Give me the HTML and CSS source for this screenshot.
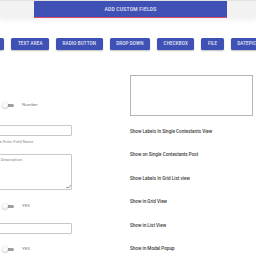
FILE: index.html
```html
<!DOCTYPE html>
<html>
<head>
<meta charset="utf-8">
<link rel="stylesheet" href="styles.css">
</head>
<body>
<header class="topbar">
  <div class="tab">ADD CUSTOM FIELDS</div>
</header>
<nav class="btn-row">
  <span class="btn">TEXT</span>
  <span class="btn">TEXT AREA</span>
  <span class="btn">RADIO BUTTON</span>
  <span class="btn">DROP DOWN</span>
  <span class="btn">CHECKBOX</span>
  <span class="btn">FILE</span>
  <span class="btn">DATEPICKER</span>
</nav>
<main class="content">
  <section class="left">
    <div class="toggle-row first"><span class="switch"><span class="knob"></span></span><span class="tlabel">Number</span></div>
    <div class="field input"></div>
    <div class="helper">Please Enter Field Name</div>
    <div class="field textarea"><span class="ph">Enter Description</span><span class="grip"></span></div>
    <div class="toggle-row t2"><span class="switch"><span class="knob"></span></span><span class="tlabel">YES</span></div>
    <div class="field input i2"></div>
    <div class="toggle-row t3"><span class="switch"><span class="knob"></span></span><span class="tlabel">YES</span></div>
  </section>
  <section class="right">
    <div class="box"></div>
    <div class="labels">
      <div class="lbl">Show Labels In Single Contestants View</div>
      <div class="lbl">Show on Single Contestants Post</div>
      <div class="lbl">Show Labels In Grid List view</div>
      <div class="lbl">Show in Grid View</div>
      <div class="lbl">Show in List View</div>
      <div class="lbl">Show in Modal Popup</div>
    </div>
  </section>
</main>
</body>
</html>
```
FILE: styles.css
```css
html, body {
  margin: 0;
  padding: 0;
  width: 256px;
  height: 256px;
  overflow: hidden;
  background: #ffffff;
  font-family: Roboto, "Liberation Sans", sans-serif;
  font-size: 5px;
  line-height: 6px;
}
.topbar {
  background: #f2f2f2;
  border-top: 1px solid #e2e2e2;
  box-shadow: 0 2px 5px rgba(0,0,0,0.06);
  display: flex;
  box-sizing: border-box;
  height: 18px;
}
.tab {
  margin-left: 34px;
  width: 193px;
  height: 16px;
  background: #3f51b5;
  border-bottom: 1px solid #e04a6a;
  color: #e8eaf6;
  font-size: 5px;
  font-weight: 500;
  letter-spacing: 0.2px;
  display: flex;
  align-items: center;
  justify-content: center;
}
.btn-row {
  display: flex;
  gap: 7px;
  margin-top: 20px;
  margin-left: -20px;
  height: 12px;
  white-space: nowrap;
}
.btn {
  flex: none;
  height: 12px;
  padding: 0 6.5px;
  background: #3f51b5;
  color: #e8eaf6;
  font-size: 4.5px;
  font-weight: 500;
  letter-spacing: 0.15px;
  border-radius: 1.5px;
  box-shadow: 0 1px 1.5px rgba(0,0,0,0.25);
  display: flex;
  align-items: center;
}
.content {
  display: flex;
  height: 206px;
}
.left {
  width: 130px;
  flex: none;
  display: flex;
  flex-direction: column;
}
.toggle-row {
  display: flex;
  align-items: center;
  height: 6px;
  margin-left: 2px;
}
.toggle-row.first { margin-top: 52px; }
.toggle-row.t2 { margin-top: 13px; }
.toggle-row.t3 { margin-top: 12px; }
.switch {
  position: relative;
  width: 13px;
  height: 6px;
  display: block;
}
.switch::before {
  content: "";
  position: absolute;
  left: 2px;
  top: 1.5px;
  width: 10px;
  height: 3.5px;
  border-radius: 2px;
  background: #a0a0a0;
}
.knob {
  position: absolute;
  left: 0;
  top: 0;
  width: 6px;
  height: 6px;
  border-radius: 50%;
  background: #fafafa;
  box-shadow: 0 0.5px 1.5px rgba(0,0,0,0.35);
}
.tlabel {
  margin-left: 7px;
  font-size: 4.4px;
  color: #777;
}
.field {
  margin-left: -12px;
  width: 84px;
  box-sizing: border-box;
  border: 1px solid #c8c8c8;
  border-radius: 1px;
  background: #fff;
}
.input { height: 11px; margin-top: 17px; }
.input.i2 { margin-top: 14px; }
.helper {
  margin-top: 3px;
  margin-left: -10px;
  font-size: 4px;
  line-height: 5px;
  color: #8a8a8a;
  white-space: nowrap;
}
.textarea {
  position: relative;
  height: 36px;
  margin-top: 10px;
  padding: 2px 1px;
  font-size: 4.2px;
  line-height: 5px;
}
.ph {
  color: #8a8a8a;
}
.grip {
  position: absolute;
  right: 1px;
  bottom: 1px;
  width: 2px;
  height: 2px;
  border-right: 0.7px solid #999;
  border-bottom: 0.7px solid #999;
  transform: skewX(-40deg);
}
.right {
  flex: 1;
  display: flex;
  flex-direction: column;
}
.box {
  margin-top: 25px;
  width: 123px;
  height: 41px;
  box-sizing: border-box;
  border: 1px solid #b5b5b5;
}
.labels {
  display: flex;
  flex-direction: column;
  gap: 17.4px;
  margin-top: 13px;
}
.lbl {
  height: 6px;
  line-height: 6px;
  font-size: 4.6px;
  font-weight: 500;
  color: #3a3a3a;
  white-space: nowrap;
}
```
